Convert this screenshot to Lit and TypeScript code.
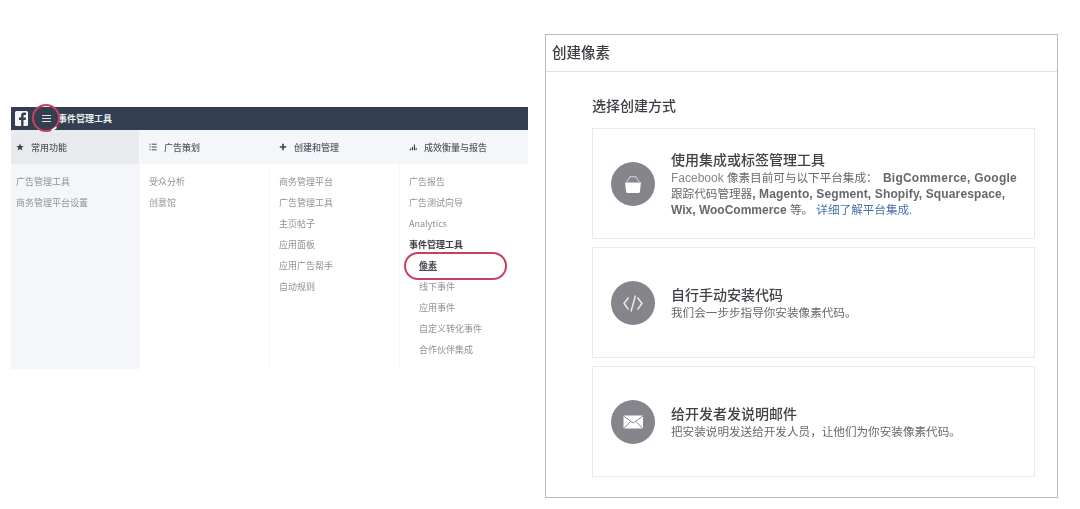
import { LitElement, html, css, svg } from "lit";
import { customElement } from "lit/decorators.js";

const bag = svg`<path d="M10 16.5 L26 16.5 L24.8 26 Q24.7 27 23.5 27 L12.5 27 Q11.3 27 11.2 26 Z" fill="#fff"/><path d="M12 15.5 L15 10.8 M24 15.5 L21 10.8 M15 10.8 H21" stroke="#fff" stroke-width="1" fill="none" stroke-dasharray="1.6 .7"/>`;
const code = svg`<path d="M13.5 12.5 L9 18.5 L13.5 24.5 M22.5 12.5 L27 18.5 L22.5 24.5 M20.5 10.5 L16 26.5" stroke="#fff" stroke-width="1.4" fill="none" opacity=".85"/>`;
const mail = svg`<rect x="8.5" y="11.5" width="19.5" height="13" rx="1" fill="#fff"/><path d="M8.5 12 L18.2 19 L28 12 M9 24.3 L15.5 17.5 M27.5 24.3 L21 17.5" stroke="#85858c" stroke-width="1" fill="none"/>`;

@customElement("app-root")
export class AppRoot extends LitElement {
  static styles = css`
    :host { display: block; width: 1080px; height: 509px; background: #fff; overflow: hidden; font-family: "Noto Sans CJK SC", "Liberation Sans", sans-serif; }
    .page { display: flex; align-items: flex-start; padding: 34px 0 0 11px; gap: 17px; }
    .menu { position: relative; width: 517px; margin-top: 73px; flex: none; filter: blur(.4px); }
    .bar { height: 23px; background: #333f50; display: flex; align-items: center; padding-left: 4px; color: #eef0f3; font-size: 9px; font-weight: 700; }
    .fb { width: 13px; height: 15px; background: #f4f5f7; border-radius: 1.5px; display: block; margin-right: 14px; }
    .burger { width: 9px; height: 7px; margin-right: 7px; border-top: 1px solid #dfe2e7; border-bottom: 1px solid #dfe2e7; position: relative; box-sizing: border-box; }
    .burger::after { content: ""; position: absolute; left: 0; right: 0; top: 2px; height: 1px; background: #dfe2e7; }
    .cols { display: grid; grid-template-columns: 128px 130px 130px 129px; }
    .col { height: 239px; border-left: 1px solid #f6f7f8; box-sizing: border-box; }
    .col:first-child { background: #f5f6f9; border-left: 0; }
    .tab { height: 34px; background: #f5f6f9; display: flex; align-items: center; gap: 7px; padding-left: 9px; font-size: 9px; color: #555962; font-weight: 500; }
    .col:first-child .tab { background: #e9eaed; padding-left: 5px; }
    .tab svg { width: 8px; height: 8px; flex: none; }
    .links { list-style: none; margin: 0; padding: 7px 0 0 9px; }
    .col:first-child .links { padding-left: 5px; }
    .links li { height: 21px; line-height: 21px; font-size: 9px; color: #8f9298; white-space: nowrap; }
    .links .strong { color: #3b3d42; font-weight: 700; }
    .links .sub { padding-left: 10px; }
    .links .on { color: #4a4c52; font-weight: 700; text-decoration: underline; }
    .mark-c { position: absolute; left: 21px; top: -3px; width: 24px; height: 24px; border: 2px solid #c8405f; border-radius: 50%; }
    .mark-c::after { content: ""; position: absolute; right: 1px; bottom: 0; width: 6px; height: 2px; background: #f2f3f5; transform: rotate(-35deg); }
    .mark-e { position: absolute; left: 393px; top: 145px; width: 99px; height: 24px; border: 2px solid #c8405f; border-radius: 14px; }

    .dialog { position: relative; width: 513px; height: 464px; box-sizing: border-box; border: 1px solid #b9babd; flex: none; filter: blur(.35px); }
    .dialog::after { content: ""; position: absolute; top: -1px; right: -1px; width: 9px; height: 1px; background: #e0a8b4; }
    .head { height: 36px; box-sizing: content-box; border-bottom: 1px solid #dedfe1; display: flex; align-items: center; padding-left: 6px; font-size: 14.5px; line-height: 33px; color: #3c3e43; font-weight: 500; }
    .head span { margin-top: -3px; }
    .body { padding: 23px 22px 0 46px; }
    h2 { margin: 0 0 12px; font-size: 14px; line-height: 21px; font-weight: 500; color: #3c3e43; }
    .cards { display: flex; flex-direction: column; gap: 8px; }
    .card { height: 111px; box-sizing: border-box; border: 1px solid #e8e9eb; display: flex; align-items: center; padding-left: 18px; gap: 16px; }
    .icon { width: 44px; height: 44px; border-radius: 50%; background: #85858c; flex: none; display: flex; align-items: center; justify-content: center; }
    .icon svg { width: 36px; height: 36px; }
    .t { font-size: 14px; line-height: 19px; margin-bottom: 1px; font-weight: 500; color: #404247; }
    .d { font-size: 11.6px; line-height: 15px; color: #66686e; white-space: nowrap; font-family: "Liberation Sans", "Noto Sans CJK SC", sans-serif; }
    .d b { font-size: 12px; font-weight: 700; color: #66686e; }
    .d .l1 { letter-spacing: .25px; margin-left: 2px; }
    .d .l2 { letter-spacing: .13px; }
    .d .fbn { font-size: 12px; color: #85878c; }
    .d a { color: #4a70ae; text-decoration: none; }
  `;

  private col(title: string, icon: unknown, links: unknown) {
    return html`<div class="col">
      <div class="tab"><svg viewBox="0 0 10 10">${icon}</svg>${title}</div>
      <ul class="links">${links}</ul>
    </div>`;
  }

  render() {
    const li = (a: string[]) => a.map((t) => html`<li>${t}</li>`);
    return html`<div class="page">
      <div class="menu">
        <div class="bar">
          <svg class="fb" viewBox="0 0 13 15"><path d="M8.5 15 V9 H10.6 L11 6.6 H8.5 V5.1 Q8.5 3.9 9.8 3.9 H11 V1.8 Q10 1.6 9.2 1.6 Q6.1 1.6 6.1 4.7 V6.6 H4 V9 H6.1 V15 Z" fill="#333f50"/></svg>
          <span class="burger"></span>事件管理工具
        </div>
        <div class="cols">
          ${this.col("常用功能", svg`<path d="M5 .6 L6.3 3.6 L9.6 3.9 L7.1 6 L7.9 9.3 L5 7.6 L2.1 9.3 L2.9 6 L.4 3.9 L3.7 3.6 Z" fill="#3f424a"/>`, li(["广告管理工具", "商务管理平台设置"]))}
          ${this.col("广告策划", svg`<path d="M.5 1.5 H2 M3.5 1.5 H9.5 M.5 5 H2 M3.5 5 H9.5 M.5 8.5 H2 M3.5 8.5 H9.5" stroke="#3f424a" stroke-width="1.2"/>`, li(["受众分析", "创意馆"]))}
          ${this.col("创建和管理", svg`<path d="M5 1 V9 M1 5 H9" stroke="#3f424a" stroke-width="2"/>`, li(["商务管理平台", "广告管理工具", "主页帖子", "应用面板", "应用广告帮手", "自动规则"]))}
          ${this.col("成效衡量与报告", svg`<path d="M1 9 V7 H2.5 V9 Z M3.5 9 V5 H5 V9 Z M6 9 V2 H7.5 V9 Z M8.2 9 V6 H9.5 V9 Z" fill="#3f424a"/>`, html`
            ${li(["广告报告", "广告测试向导", "Analytics"])}
            <li class="strong">事件管理工具</li>
            <li class="sub on">像素</li>
            <li class="sub">线下事件</li>
            <li class="sub">应用事件</li>
            <li class="sub">自定义转化事件</li>
            <li class="sub">合作伙伴集成</li>`)}
        </div>
        <div class="mark-c"></div>
        <div class="mark-e"></div>
      </div>

      <div class="dialog">
        <div class="head"><span>创建像素</span></div>
        <div class="body">
          <h2>选择创建方式</h2>
          <div class="cards">
            <div class="card">
              <div class="icon"><svg viewBox="0 0 36 36">${bag}</svg></div>
              <div class="txt">
                <div class="t">使用集成或标签管理工具</div>
                <div class="d"><span class="fbn">Facebook</span> 像素目前可与以下平台集成： <b class="l1">BigCommerce, Google</b><br>跟踪代码管理器<b class="l2">, Magento, Segment, Shopify, Squarespace,</b><br><b>Wix, WooCommerce</b> 等。 <a>详细了解平台集成.</a></div>
              </div>
            </div>
            <div class="card">
              <div class="icon"><svg viewBox="0 0 36 36">${code}</svg></div>
              <div class="txt">
                <div class="t">自行手动安装代码</div>
                <div class="d">我们会一步步指导你安装像素代码。</div>
              </div>
            </div>
            <div class="card">
              <div class="icon"><svg viewBox="0 0 36 36">${mail}</svg></div>
              <div class="txt">
                <div class="t">给开发者发说明邮件</div>
                <div class="d">把安装说明发送给开发人员，让他们为你安装像素代码。</div>
              </div>
            </div>
          </div>
        </div>
      </div>
    </div>`;
  }
}
